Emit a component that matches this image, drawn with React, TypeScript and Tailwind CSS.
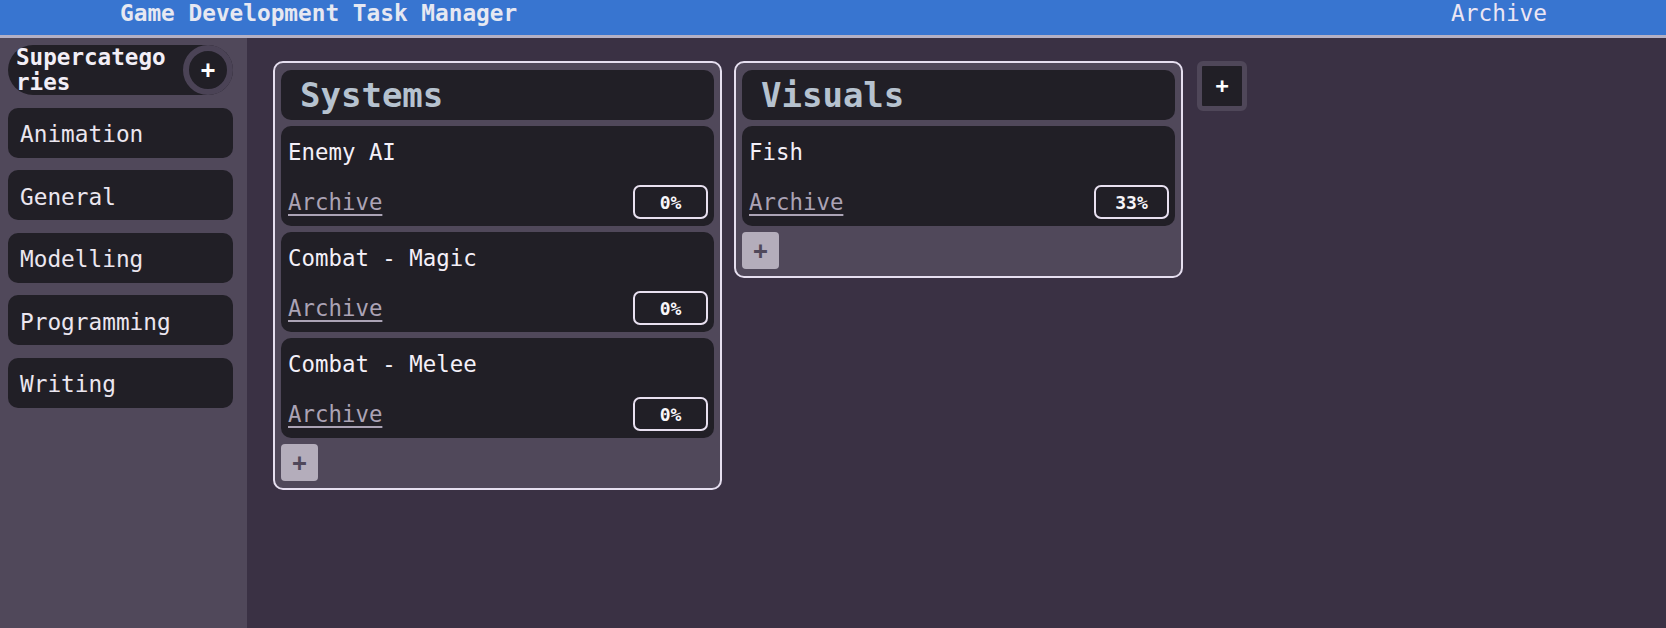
import React from "react";

const mono = { fontFamily: '"DejaVu Sans Mono", "Liberation Mono", monospace' };

type Task = { title: string; pct: string };
type Column = { name: string; tasks: Task[] };

function TaskCard({ t }: { t: Task }) {
  return (
    <div className="flex h-[100px] flex-col justify-between rounded-[10px] bg-[#211f26] pb-[7px] pl-[7px] pr-[6px] pt-[12px]">
      <div className="text-[22.4px] leading-[28px] text-[#f4f0f8]">{t.title}</div>
      <div className="flex items-center justify-between">
        <span className="text-[22.4px] leading-[28px] text-[#aba3b5] underline decoration-[2px] underline-offset-[4px]">
          Archive
        </span>
        <div className="flex h-[34px] w-[75px] items-center justify-center rounded-[7px] border-2 border-[#e8e0f0] text-[18px] font-semibold text-[#f8f6fa]">
          {t.pct}
        </div>
      </div>
    </div>
  );
}

function ColumnPanel({ c }: { c: Column }) {
  return (
    <div className="flex w-[449px] flex-col gap-[6px] rounded-[10px] border-2 border-[#e6dff0] bg-[#50485a] px-[6px] pb-[7px] pt-[7px]">
      <div className="flex h-[50px] items-center rounded-[10px] bg-[#211f26] pl-[19px]">
        <span className="text-[34px] font-bold leading-[50px] text-[#b6c2cf]">{c.name}</span>
      </div>
      {c.tasks.map((t) => (
        <TaskCard key={t.title} t={t} />
      ))}
      <div className="flex h-[37px] w-[37px] items-center justify-center rounded-[4px] bg-[#b4adbb] text-[24px] font-bold leading-none text-[#50485a]">
        +
      </div>
    </div>
  );
}

export default function App() {
  const categories = ["Animation", "General", "Modelling", "Programming", "Writing"];
  const columns: Column[] = [
    {
      name: "Systems",
      tasks: [
        { title: "Enemy AI", pct: "0%" },
        { title: "Combat - Magic", pct: "0%" },
        { title: "Combat - Melee", pct: "0%" },
      ],
    },
    {
      name: "Visuals",
      tasks: [{ title: "Fish", pct: "33%" }],
    },
  ];

  return (
    <div className="flex min-h-screen flex-col bg-[#3a3144]" style={mono}>
      <header className="flex h-[38px] shrink-0 items-start justify-between border-b-[3px] border-[#b4b0c4] bg-[#3875d0] pl-[120px] pr-[119px] pt-[1px]">
        <span className="text-[22.75px] font-bold leading-[24px] text-[#e6e8f2]">Game Development Task Manager</span>
        <span className="text-[22.75px] leading-[24px] text-[#ece6f4]">Archive</span>
      </header>
      <div className="flex flex-1">
        <aside className="flex w-[247px] shrink-0 flex-col gap-[12.5px] bg-[#50485a] pl-[8px] pr-[14px] pt-[7px]">
          <div className="flex h-[50px] items-center justify-between rounded-full bg-[#211f26] pl-[8px]">
            <span className="w-[155px] break-all text-[22.6px] font-bold leading-[25px] text-[#f2eef6]">
              Supercategories
            </span>
            <div className="flex h-[50px] w-[50px] items-center justify-center rounded-full border-[6px] border-[#4b4356] bg-[#211f26] text-[24px] font-bold leading-none text-white">
              +
            </div>
          </div>
          {categories.map((c) => (
            <div
              key={c}
              className="flex h-[50px] items-center rounded-[10px] bg-[#211f26] pl-[12px] pt-[3px] text-[22.75px] leading-[28px] text-[#ebe6ef]"
            >
              {c}
            </div>
          ))}
        </aside>
        <main className="flex flex-1 items-start pl-[26px] pt-[23px]">
          <div className="flex items-start gap-[12px]">
            {columns.map((c) => (
              <ColumnPanel key={c.name} c={c} />
            ))}
          </div>
          <div className="ml-[14px] flex h-[50px] w-[50px] items-center justify-center rounded-[6px] border-[5px] border-[#4f4759] bg-[#211f26] text-[22px] font-bold leading-none text-white">
            +
          </div>
        </main>
      </div>
    </div>
  );
}
